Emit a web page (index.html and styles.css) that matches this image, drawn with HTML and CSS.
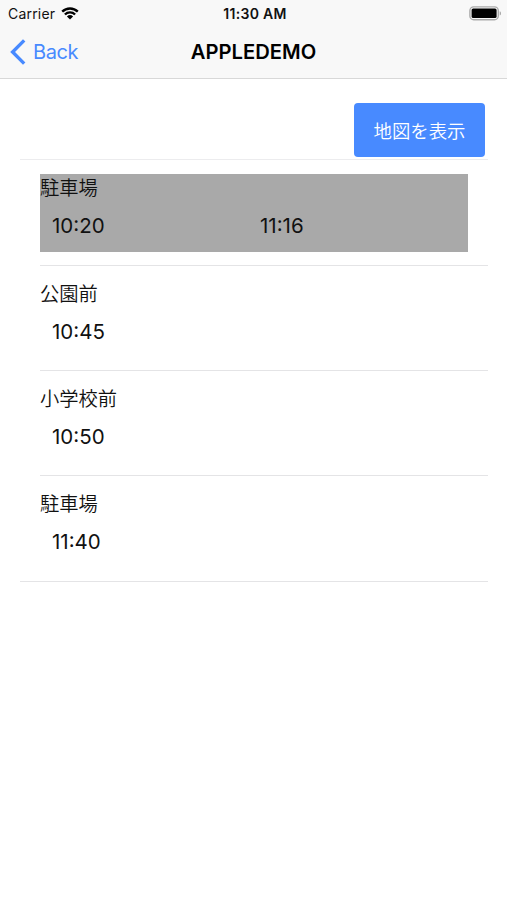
FILE: index.html
```html
<!DOCTYPE html>
<html lang="ja">
  <head>
    <meta charset="UTF-8" />
    <meta name="viewport" content="width=device-width, initial-scale=1.0" />
    <title>APPLEDEMO</title>
    <link rel="stylesheet" href="styles.css">
  </head>
  <body>
    <header class="header">
      <div class="status-bar">
        <div class="carrier">
          <span class="carrier-name">Carrier</span>
          <svg class="wifi" width="18" height="13" viewBox="0 0 18 13">
            <path d="M1.2 4.6a11.2 11.2 0 0 1 15.6 0" />
            <path d="M3.9 7.5a7.3 7.3 0 0 1 10.2 0" />
            <path class="dot" d="M9 12.6L5.9 9.5a4.5 4.5 0 0 1 6.2 0z" />
          </svg>
        </div>
        <span class="clock">11:30 AM</span>
        <svg class="battery" width="32" height="15" viewBox="0 0 32 15">
          <rect class="shell" x="0.9" y="0.9" width="28.4" height="12.8" rx="3.8" />
          <rect x="2.6" y="2.5" width="25" height="9.6" rx="1.6" />
          <path class="tip" d="M30.7 5.2q1.5.6 1.5 2.1t-1.5 2.1z" />
        </svg>
      </div>
      <nav class="nav-bar">
        <a class="back" href="#">
          <svg width="16" height="26" viewBox="0 0 16 26">
            <path d="M14.2 1.4L2.6 13l11.6 11.6" />
          </svg>
          <span>Back</span>
        </a>
        <h1>APPLEDEMO</h1>
      </nav>
    </header>
    <main class="content">
      <div class="toolbar">
        <button type="button" class="btn">地図を表示</button>
      </div>
      <ul class="stops">
        <li class="stop">
          <div class="stop-body passed">
            <p class="stop-name">駐車場</p>
            <div class="times">
              <span>10:20</span>
              <span>11:16</span>
            </div>
          </div>
        </li>
        <li class="stop">
          <div class="stop-body">
            <p class="stop-name">公園前</p>
            <div class="times"><span>10:45</span></div>
          </div>
        </li>
        <li class="stop">
          <div class="stop-body">
            <p class="stop-name">小学校前</p>
            <div class="times"><span>10:50</span></div>
          </div>
        </li>
        <li class="stop">
          <div class="stop-body">
            <p class="stop-name">駐車場</p>
            <div class="times"><span>11:40</span></div>
          </div>
        </li>
      </ul>
    </main>
  </body>
</html>
```

FILE: styles.css
```css
* {
  margin: 0;
  padding: 0;
  box-sizing: border-box;
}
body {
  font-family: Inter, "Noto Sans CJK JP", sans-serif;
  background-color: #fff;
  color: #111;
  min-height: 100vh;
}
.header {
  height: 79px;
  background-color: #f8f8f8;
  border-bottom: 1px solid #d8d8d8;
}
.status-bar {
  display: grid;
  grid-template-columns: 1fr auto 1fr;
  align-items: center;
  height: 27px;
  padding: 0 6px 0 8px;
}
.carrier {
  display: flex;
  align-items: center;
  gap: 6px;
}
.carrier-name {
  font-size: 14px;
  letter-spacing: 0.2px;
}
.wifi {
  fill: none;
  stroke: #000;
  stroke-width: 2.4;
}
.wifi .dot {
  fill: #000;
  stroke: none;
}
.clock {
  padding-left: 1px;
  font-size: 14px;
  font-weight: 600;
  letter-spacing: 0.3px;
}
.battery {
  justify-self: end;
}
.battery .shell {
  fill: #f8f8f8;
  stroke: #aaa;
  stroke-width: 1.4;
}
.battery .tip {
  fill: #aaa;
}
.nav-bar {
  display: grid;
  grid-template-columns: 1fr auto 1fr;
  align-items: center;
  height: 49px;
  padding: 0 10px;
}
.back {
  display: flex;
  align-items: center;
  gap: 7px;
  color: #488aff;
  font-size: 20px;
  letter-spacing: -0.4px;
  text-decoration: none;
}
.back svg {
  fill: none;
  stroke: #488aff;
  stroke-width: 3.4;
}
.nav-bar h1 {
  font-size: 20.2px;
  font-weight: 600;
  color: #000;
}
.content {
  padding: 24px 19px 0 20px;
}
.toolbar {
  display: flex;
  justify-content: flex-end;
  height: 57px;
  padding-right: 3px;
  border-bottom: 1px solid #ececee;
}
.btn {
  width: 131px;
  height: 54px;
  border: none;
  border-radius: 4px;
  background-color: #488aff;
  color: #fff;
  font-family: inherit;
  font-size: 18.4px;
  font-weight: 350;
}
.stops {
  list-style: none;
  border-bottom: 1px solid #e4e4e6;
}
.stop {
  height: 105.4px;
  margin-left: 20px;
  padding: 14px 20px 0 0;
  border-bottom: 1px solid #e4e4e6;
}
.stop:first-child {
  height: 105.6px;
}
.stop:last-child {
  height: 104.8px;
  border-bottom: none;
}
.stop-body {
  height: 78px;
}
.passed {
  background-color: #a9a9a9;
}
.stop-name {
  height: 28px;
  line-height: 28px;
  font-size: 19.3px;
  font-weight: 350;
}
.times {
  display: grid;
  grid-template-columns: 1fr 1fr;
  padding: 11px 0 0 12px;
  line-height: 26px;
  font-size: 20.5px;
}
```
